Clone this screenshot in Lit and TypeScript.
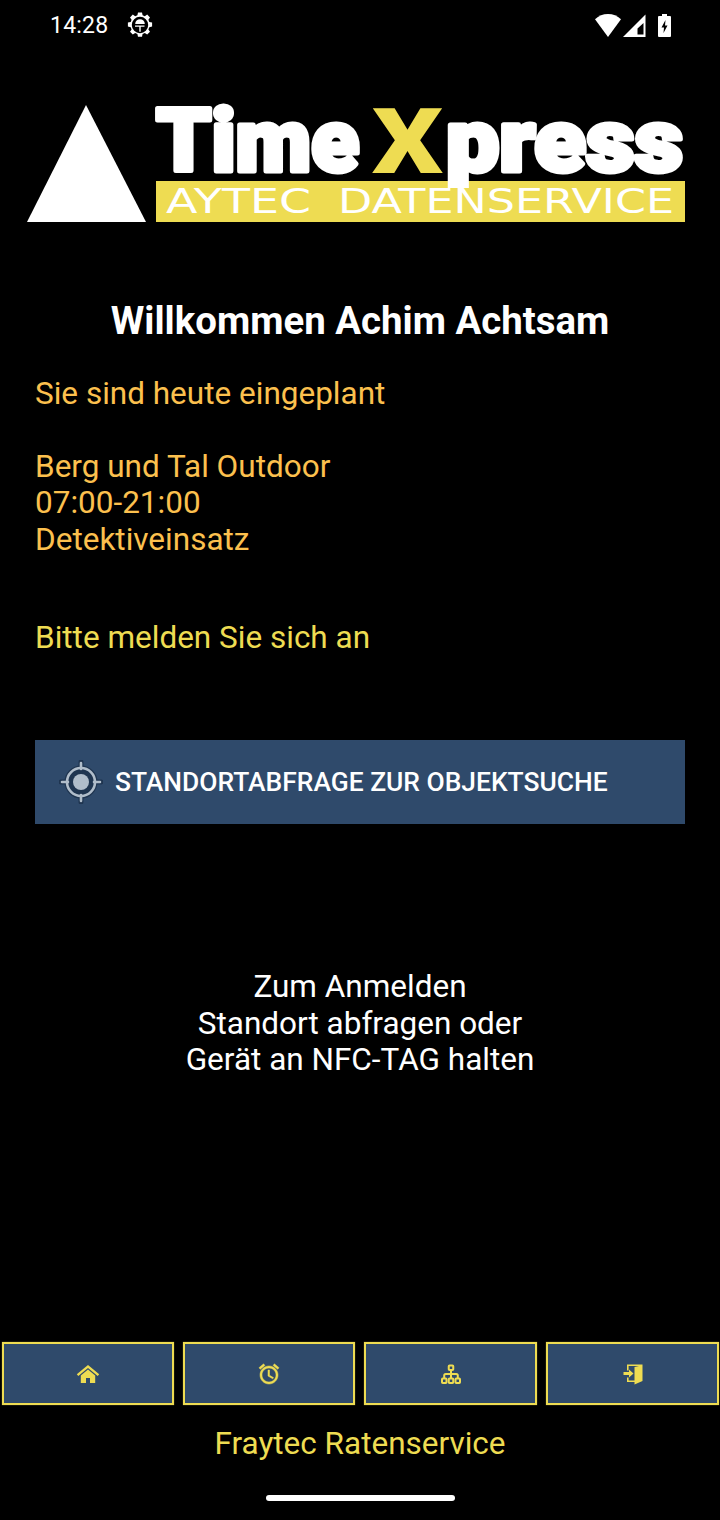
import { LitElement, html, css, svg } from "lit";
import { customElement } from "lit/decorators.js";

const home = svg`<path d="M12 3 .8 12.200l1.500 1.800L12 6l9.700 8 1.500-1.800zM12 7.600 4.800 13.500V21H10v-5h4v5h5.200v-7.500z"/>`;
const alarm = svg`<path stroke="currentColor" stroke-width=".5" d="M22 5.720l-4.600-3.860-1.290 1.530 4.600 3.860L22 5.720zM7.880 3.390L6.600 1.860 2 5.710l1.290 1.530 4.590-3.850zM12.500 8H11v6l4.750 2.850.75-1.230-4-2.370V8zM12 4c-4.970 0-9 4.030-9 9s4.030 9 9 9 9-4.030 9-9-4.030-9-9-9zm0 16c-3.870 0-7-3.130-7-7s3.130-7 7-7 7 3.130 7 7-3.130 7-7 7z"/>`;
const tree = svg`<g fill="none" stroke="currentColor" stroke-width="2"><rect x="9.750" y="3.500" width="4.500" height="4.500" rx=".8"/><rect x="3" y="16.500" width="4.500" height="4.500" rx=".8"/><rect x="9.750" y="16.500" width="4.500" height="4.500" rx=".8"/><rect x="16.500" y="16.500" width="4.500" height="4.500" rx=".8"/><path d="M12 8v8.500M5.200 16.500v-3a1.500 1.500 0 0 1 1.500-1.500h10.600a1.500 1.500 0 0 1 1.500 1.500v3"/></g>`;
const door = svg`<path d="M6 2.500H21.500V19L13.500 22.500V20H6V15.500H7.600V18.400H13.500V5L18 4.100H7.600V8.500H6z"/><path d="M2.500 10h5.500V7.500l4.500 4-4.500 4V13H2.500z"/>`;

@customElement("app-root")
export class AppRoot extends LitElement {
  static styles = css`
    :host {
      display: block;
      width: 720px;
      height: 1520px;
      background: #000;
      color: #fff;
      font-family: Roboto, "Liberation Sans", sans-serif;
      overflow: hidden;
    }
    .page { display: flex; flex-direction: column; height: 1520px; }
    .status {
      height: 50px;
      flex: none;
      display: flex;
      align-items: center;
      padding: 0 49px 0 50px;
      font-size: 23px;
      letter-spacing: 0.2px;
    }
    .gear { width: 26px; height: 26px; margin-left: 19px; }
    .status-right { margin-left: auto; display: flex; align-items: center; }
    .wifi { width: 26px; height: 23px; margin-right: 2px; }
    .cell { width: 23px; height: 23px; margin-right: 12px; }
    .batt { width: 13px; height: 23px; }
    .logo { display: block; width: 720px; height: 240px; flex: none; margin-bottom: 1px; }
    .logo-main { font-family: Roboto, sans-serif; font-weight: 900; font-size: 87px; stroke-width: 5px; stroke-linejoin: round; }
    .logo-x { font-family: Roboto, sans-serif; font-weight: 900; font-size: 91px; }
    .logo-sub { font-family: "DejaVu Sans", sans-serif; font-weight: 400; font-size: 34px; fill: #fff; }
    h1 {
      margin: 8px 0 0;
      height: 44px;
      line-height: 44px;
      font-size: 38.4px;
      font-weight: 700;
      text-align: center;
    }
    .copy { padding: 0 35px; font-size: 31.5px; line-height: 36.5px; }
    .plan { margin-top: 32.5px; color: #fcc04e; }
    .gap { height: 36.5px; }
    .signin { margin-top: 62px; color: #eedc52; }
    .locate {
      margin: 83.5px 35px 0;
      height: 84px;
      flex: none;
      display: flex;
      align-items: center;
      background: #2f4a6b;
      color: #fff;
      font-size: 26.4px;
      font-weight: 500;
      box-sizing: border-box;
      padding-left: 24px;
    }
    .target { width: 44px; height: 44px; margin-right: 12px; flex: none; }
    .hint { margin-top: 145px; text-align: center; font-size: 31.5px; line-height: 36.5px; }
    .nav {
      margin-top: auto;
      display: grid;
      grid-template-columns: 172px 172px 173px 173px;
      column-gap: 9px;
      padding-left: 2px;
      height: 63px;
      flex: none;
    }
    .nav div {
      border: 2px solid #eedc52;
      background: #2f4a6b;
      color: #eedc52;
      box-shadow: 0 0 1px rgba(238, 220, 82, 0.6);
      display: flex;
      align-items: center;
      justify-content: center;
    }
    .nav svg { width: 24px; height: 24px; fill: currentColor; }
    .footer {
      margin-top: 21px;
      text-align: center;
      color: #eedc52;
      font-size: 31.5px;
      line-height: 36px;
      flex: none;
    }
    .handle-wrap { height: 58px; flex: none; padding-top: 33px; box-sizing: border-box; }
    .handle { width: 189px; height: 6px; border-radius: 3px; background: #fff; margin: 0 auto; }
  `;

  render() {
    return html`<div class="page">
      <div class="status">
        <span>14:28</span>
        <svg class="gear" viewBox="0 0 26 26">
          <path fill="#fff" fill-rule="evenodd" d="M11 .5h4l.6 2.800 2.200.9 2.400-1.600 2.800 2.800-1.600 2.400.9 2.200 2.800.6v4l-2.800.6-.9 2.200 1.600 2.400-2.800 2.800-2.400-1.600-2.200.9-.6 2.800h-4l-.6-2.800-2.200-.9-2.400 1.600-2.800-2.800 1.600-2.400-.9-2.200-2.800-.6v-4l2.800-.6.9-2.200-1.600-2.400 2.800-2.800 2.400 1.600 2.200-.9zM13 4.800a8.200 8.200 0 1 0 0 16.400 8.200 8.200 0 0 0 0-16.400z"/>
          <path fill="#fff" d="M8.200 12a4.800 4.800 0 0 1 9.600 0zM8 13.500h9.500v1.300h-3.800v5H12.300v-5H8z"/>
        </svg>
        <div class="status-right">
          <svg class="wifi" viewBox="0 0 26 23"><path fill="#fff" d="M13 0C8 0 3.700 1.800 0 5.200L13 23 26 5.200C22.300 1.800 18 0 13 0z"/></svg>
          <svg class="cell" viewBox="0 0 23 23"><path fill="#fff" fill-rule="evenodd" d="M22.500 .5V23H0zM20.500 9 14.500 14.500V20.500H20.500z"/></svg>
          <svg class="batt" viewBox="0 0 13 23"><path fill="#fff" fill-rule="evenodd" d="M4 0h5v2h3a1 1 0 0 1 1 1v19a1 1 0 0 1-1 1H1a1 1 0 0 1-1-1V3a1 1 0 0 1 1-1h3zM7.500 6 3.500 13.500H6L5.500 19l4-7.500H7z"/></svg>
        </div>
      </div>

      <svg class="logo" viewBox="0 50 720 240" role="img" aria-label="TimeXpress Aytec Datenservice">
        <polygon points="86,105 146,222 27,222" fill="#fff"/>
        <rect x="156" y="181" width="529" height="41" fill="#eedc52"/>
        <text class="logo-main" x="156" y="171" textLength="203" lengthAdjust="spacingAndGlyphs" fill="#fff" stroke="#fff">Time</text>
        <text class="logo-x" x="372" y="173" textLength="71" lengthAdjust="spacingAndGlyphs" fill="#eedc52">X</text>
        <text class="logo-main" x="446" y="171" textLength="237" lengthAdjust="spacingAndGlyphs" fill="#fff" stroke="#fff">press</text>
        <rect x="156" y="188" width="529" height="6" fill="#eedc52"/>
        <text class="logo-sub" x="166" y="213" textLength="145" lengthAdjust="spacingAndGlyphs">AYTEC</text>
        <text class="logo-sub" x="338" y="213" textLength="336" lengthAdjust="spacingAndGlyphs">DATENSERVICE</text>
      </svg>

      <h1>Willkommen Achim Achtsam</h1>
      <div class="copy plan">
        Sie sind heute eingeplant
        <div class="gap"></div>
        Berg und Tal Outdoor<br />07:00-21:00<br />Detektiveinsatz
      </div>
      <div class="copy signin">Bitte melden Sie sich an</div>

      <div class="locate">
        <svg class="target" viewBox="0 0 44 44">
          <circle cx="22" cy="22" r="14" fill="#1f3550"/>
          <g fill="none" stroke="#1f3550" stroke-width="5" stroke-linecap="round"><circle cx="22" cy="22" r="14"/><path d="M22 2v7M22 35v7M2 22h7M35 22h7"/></g>
          <g fill="none" stroke="#b0bdca" stroke-width="2.600" stroke-linecap="round"><circle cx="22" cy="22" r="14"/><path d="M22 3v6M22 35v6M3 22h6M35 22h6"/></g>
          <circle cx="22" cy="22" r="8" fill="#b0bdca"/>
        </svg>
        STANDORTABFRAGE ZUR OBJEKTSUCHE
      </div>

      <div class="hint">Zum Anmelden<br />Standort abfragen oder<br />Gerät an NFC-TAG halten</div>

      <div class="nav">
        <div><svg viewBox="0 0 24 24">${home}</svg></div>
        <div><svg viewBox="0 0 24 24">${alarm}</svg></div>
        <div><svg viewBox="0 0 24 24">${tree}</svg></div>
        <div><svg viewBox="0 0 24 24">${door}</svg></div>
      </div>
      <div class="footer">Fraytec Ratenservice</div>
      <div class="handle-wrap"><div class="handle"></div></div>
    </div>`;
  }
}
